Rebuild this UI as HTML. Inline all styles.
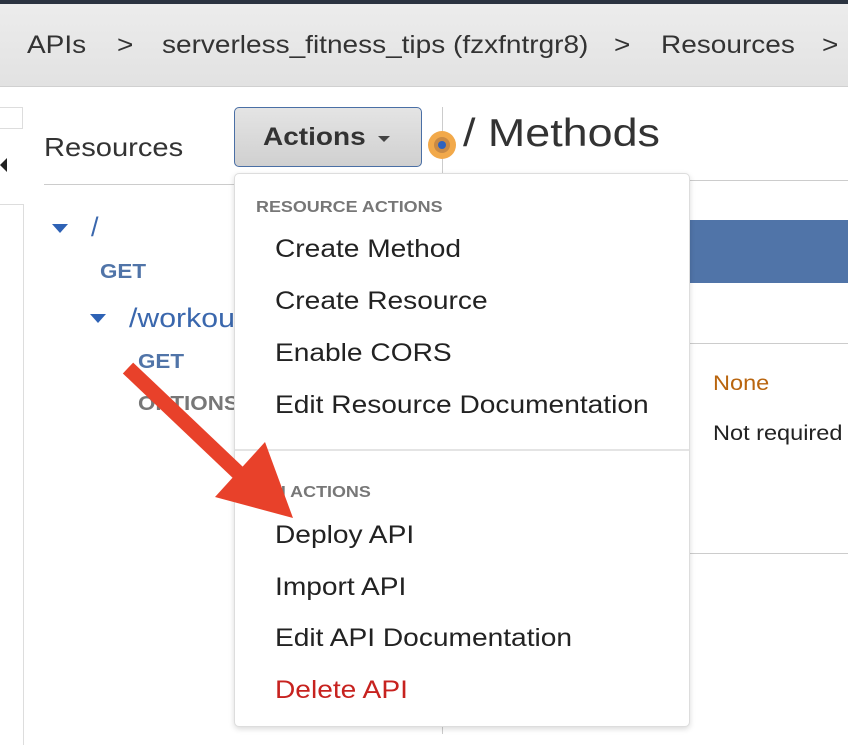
<!DOCTYPE html>
<html><head><style>
body{margin:0;width:848px;height:734px;overflow:hidden;background:#fff;font-family:"Liberation Sans",sans-serif;position:relative}
.a{position:absolute;white-space:nowrap;transform-origin:left center}
.s{transform:scaleX(1.12)}
.mi{position:absolute;left:275px;font-size:25px;color:#222;line-height:30px;white-space:nowrap;transform:scaleX(1.125);transform-origin:left center}
</style></head><body>
<div class="a" style="left:0;top:0;width:848px;height:4px;background:#2b3340"></div>
<div class="a" style="left:0;top:4px;width:848px;height:82px;background:linear-gradient(#ececec,#e2e2e2);border-bottom:1px solid #d0d0d0"></div>
<div class="a s" style="left:27px;top:30px;font-size:25px;color:#333;line-height:30px">APIs</div>
<div class="a s" style="left:117px;top:30px;font-size:25px;color:#333;line-height:30px">&gt;</div>
<div class="a s" style="left:162px;top:30px;font-size:25px;color:#333;line-height:30px">serverless_fitness_tips (fzxfntrgr8)</div>
<div class="a s" style="left:614px;top:30px;font-size:25px;color:#333;line-height:30px">&gt;</div>
<div class="a s" style="left:661px;top:30px;font-size:25px;color:#333;line-height:30px">Resources</div>
<div class="a s" style="left:822px;top:30px;font-size:25px;color:#333;line-height:30px">&gt;</div>

<div class="a" style="left:-2px;top:107px;width:24px;height:20px;border:1px solid #ddd;border-left:none"></div>
<div class="a" style="left:0;top:158px;width:0;height:0;border-top:7px solid transparent;border-bottom:7px solid transparent;border-right:7px solid #222"></div>
<div class="a" style="left:0;top:204px;width:23px;height:540px;border-right:1px solid #ddd;border-top:1px solid #ddd"></div>
<div class="a s" style="left:44px;top:132px;font-size:26px;color:#333">Resources</div>
<div class="a" style="left:44px;top:184px;width:398px;height:1px;background:#ccc"></div>
<div class="a" style="left:442px;top:107px;width:1px;height:627px;background:#ccc"></div>
<div class="a" style="left:442px;top:180px;width:406px;height:1px;background:#ccc"></div>

<div class="a" style="left:52px;top:224px;border-left:8px solid transparent;border-right:8px solid transparent;border-top:9px solid #2e62b5"></div>
<div class="a" style="left:91px;top:212px;font-size:27px;color:#3a67ad">/</div>
<div class="a s" style="left:100px;top:261px;font-size:20px;font-weight:bold;color:#5074a8">GET</div>
<div class="a" style="left:90px;top:314px;border-left:8px solid transparent;border-right:8px solid transparent;border-top:9px solid #2e62b5"></div>
<div class="a s" style="left:129px;top:303px;font-size:27px;color:#3a67ad">/workouts</div>
<div class="a s" style="left:138px;top:351px;font-size:20px;font-weight:bold;color:#5074a8">GET</div>
<div class="a s" style="left:138px;top:393px;font-size:20px;font-weight:bold;color:#777">OPTIONS</div>

<div class="a" style="left:690px;top:220px;width:158px;height:63px;background:#5074a8"></div>
<div class="a" style="left:690px;top:343px;width:158px;height:1px;background:#ccc"></div>
<div class="a" style="left:690px;top:553px;width:158px;height:1px;background:#ccc"></div>
<div class="a s" style="left:713px;top:372px;font-size:21px;color:#b9650f">None</div>
<div class="a s" style="left:713px;top:422px;font-size:21px;color:#222">Not required</div>

<div class="a" style="left:234px;top:107px;width:188px;height:60px;border:1px solid #4a6fa5;border-radius:5px;background:linear-gradient(#e4e4e4,#d0d0d0);box-sizing:border-box"></div>
<div class="a s" style="left:263px;top:123px;font-size:25px;font-weight:bold;color:#333">Actions</div>
<div class="a" style="left:378px;top:136px;border-left:6px solid transparent;border-right:6px solid transparent;border-top:6px solid #444"></div>
<div class="a" style="left:428px;top:131px;width:28px;height:28px;border-radius:50%;background:#f2a94a"></div>
<div class="a" style="left:434px;top:137px;width:16px;height:16px;border-radius:50%;background:#c98a45"></div>
<div class="a" style="left:438px;top:141px;width:8px;height:8px;border-radius:50%;background:#2d62c0"></div>
<div class="a" style="left:463px;top:112px;font-size:39px;color:#333;transform:scaleX(1.15)">/ Methods</div>

<div class="a" style="left:234px;top:173px;width:456px;height:554px;background:#fff;border:1px solid #ddd;border-radius:5px;box-sizing:border-box;box-shadow:0 2px 6px rgba(0,0,0,.15)"></div>
<div class="a s" style="left:256px;top:199px;font-size:16px;font-weight:bold;color:#777">RESOURCE ACTIONS</div>
<div class="mi" style="top:234px">Create Method</div>
<div class="mi" style="top:286px">Create Resource</div>
<div class="mi" style="top:338px">Enable CORS</div>
<div class="mi" style="top:390px">Edit Resource Documentation</div>
<div class="a" style="left:235px;top:449px;width:454px;height:2px;background:#e4e4e4"></div>
<div class="a s" style="left:256px;top:484px;font-size:16px;font-weight:bold;color:#777">API ACTIONS</div>
<div class="mi" style="top:520px">Deploy API</div>
<div class="mi" style="top:572px">Import API</div>
<div class="mi" style="top:623px">Edit API Documentation</div>
<div class="mi" style="top:675px;color:#c7221f">Delete API</div>

<svg class="a" style="left:0;top:0" width="848" height="734">
<line x1="128" y1="368" x2="248" y2="482" stroke="#e8412a" stroke-width="15"/>
<polygon points="215,497 265,442 293,518" fill="#e8412a"/>
</svg>
</body></html>
